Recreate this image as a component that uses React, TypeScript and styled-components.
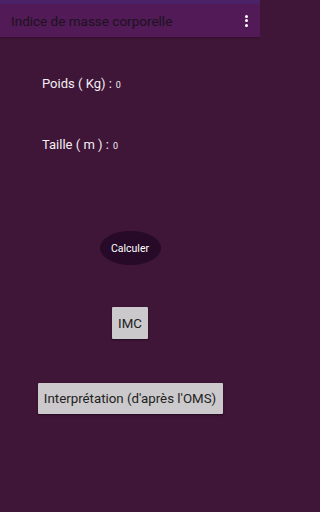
import React from 'react';
import styled, { createGlobalStyle } from 'styled-components';

const GlobalStyle = createGlobalStyle`
  html, body {
    margin: 0;
    padding: 0;
    background: #3f1538;
  }
  body {
    font-family: Roboto, "Liberation Sans", sans-serif;
  }
`;

const Screen = styled.div`
  width: 260px;
  height: 512px;
  display: flex;
  flex-direction: column;
  background: #3f1538;
  overflow: hidden;
`;

const StatusStrip = styled.div`
  height: 4px;
  background: #4a2268;
`;

const AppBar = styled.header`
  height: 33px;
  display: flex;
  align-items: center;
  justify-content: space-between;
  padding: 0 10px 0 11px;
  background: #521a56;
  box-shadow: 0 1px 2px rgba(0, 0, 0, 0.25);
`;

const Title = styled.h1`
  margin: 0;
  font-size: 13.5px;
  font-weight: 400;
  color: #1c1320;
`;

const MenuButton = styled.div`
  display: flex;
  flex-direction: column;
  gap: 1.5px;
  padding: 2px;
`;

const Dot = styled.span`
  width: 3px;
  height: 3px;
  border-radius: 50%;
  background: #ffffff;
`;

const Content = styled.main`
  flex: 1;
  display: flex;
  flex-direction: column;
`;

const Field = styled.div<{ $top: number }>`
  display: flex;
  align-items: baseline;
  margin: ${(p) => p.$top}px 0 0 42px;
  color: #f2eef2;
`;

const Label = styled.span`
  font-size: 13px;
`;

const Value = styled.span`
  font-size: 9px;
  margin-left: 4px;
`;

const Center = styled.div<{ $top: number }>`
  display: flex;
  justify-content: center;
  margin-top: ${(p) => p.$top}px;
`;

const OvalButton = styled.button`
  width: 61px;
  height: 34px;
  border: none;
  border-radius: 50%;
  background: #260a27;
  color: #ffffff;
  font-family: Roboto, "Liberation Sans", sans-serif;
  font-size: 10.5px;
  padding: 0;
`;

const GreyButton = styled.button<{ $w: number; $h: number }>`
  width: ${(p) => p.$w}px;
  height: ${(p) => p.$h}px;
  border: none;
  border-radius: 1px;
  background: #cbc9cb;
  color: #222222;
  font-family: Roboto, "Liberation Sans", sans-serif;
  font-size: 13.3px;
  padding: 0;
  box-shadow: 0 1px 2px rgba(0, 0, 0, 0.45);
`;

export default function App() {
  return (
    <>
      <GlobalStyle />
      <Screen>
        <StatusStrip />
        <AppBar>
          <Title>Indice de masse corporelle</Title>
          <MenuButton>
            <Dot />
            <Dot />
            <Dot />
          </MenuButton>
        </AppBar>
        <Content>
          <Field $top={39}>
            <Label>Poids ( Kg) :</Label>
            <Value>0</Value>
          </Field>
          <Field $top={46}>
            <Label>Taille ( m ) :</Label>
            <Value>0</Value>
          </Field>
          <Center $top={79}>
            <OvalButton>Calculer</OvalButton>
          </Center>
          <Center $top={42}>
            <GreyButton $w={36} $h={32}>IMC</GreyButton>
          </Center>
          <Center $top={44}>
            <GreyButton $w={185} $h={31}>Interprétation (d'après l'OMS)</GreyButton>
          </Center>
        </Content>
      </Screen>
    </>
  );
}
